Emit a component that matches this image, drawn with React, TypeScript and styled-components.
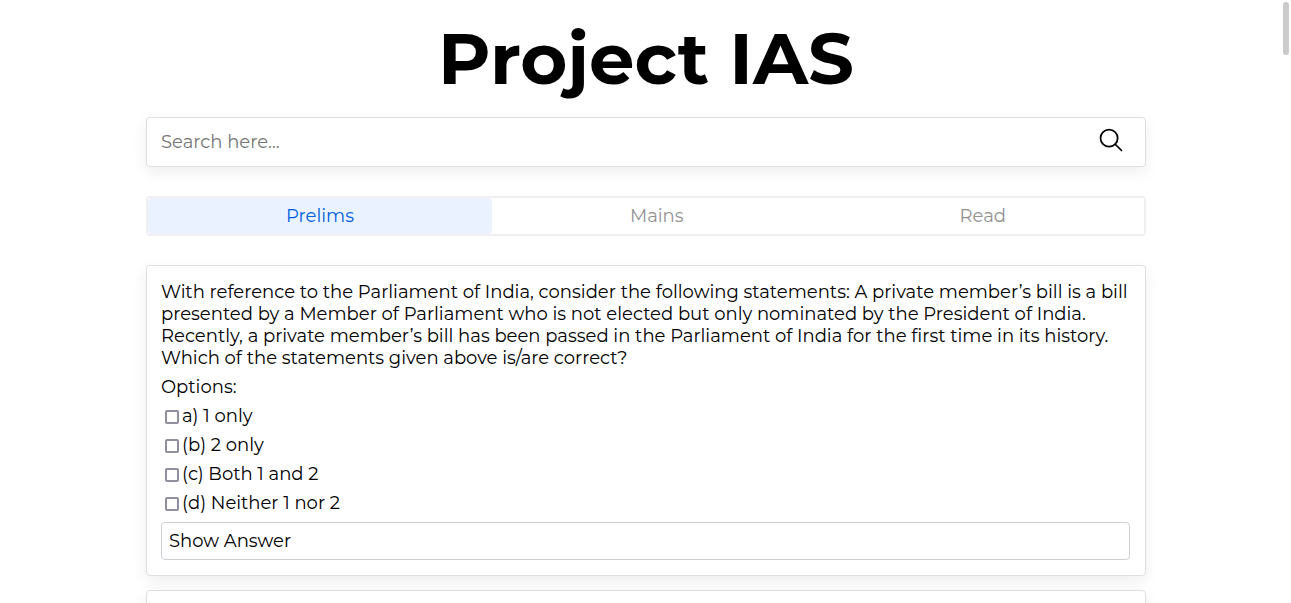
import React from "react";
import styled, { createGlobalStyle } from "styled-components";
import { IoSearchOutline } from "react-icons/io5";

const GlobalStyle = createGlobalStyle`
  *, *::before, *::after { box-sizing: border-box; }
  html { scrollbar-width: none; }
  body {
    margin: 0;
    background: #fff;
    color: #000;
    font-family: Montserrat, Inter, sans-serif;
    font-size: 18px;
    line-height: 22px;
  }
  button, input { font: inherit; color: inherit; }
`;

const Page = styled.main`
  width: 100%;
  max-width: 1001px;
  margin: 0 auto;
  padding-left: 1px;
`;

const Title = styled.h1`
  margin: 0;
  padding: 14px 0 15px;
  font-size: 72px;
  line-height: 88px;
  font-weight: 700;
  text-align: center;
`;

const SearchBar = styled.form`
  display: flex;
  align-items: center;
  height: 50px;
  border: 1px solid #dfdfdf;
  border-radius: 4px;
  background: #fff;
  box-shadow: 0 5px 15px rgba(0, 0, 0, 0.07);
`;

const SearchInput = styled.input`
  flex: 1;
  min-width: 0;
  padding: 0 14px;
  border: 0;
  outline: 0;
  background: transparent;
  &::placeholder { color: #757575; opacity: 1; }
`;

const SearchButton = styled.button`
  display: flex;
  padding: 0 20px 4px;
  border: 0;
  background: transparent;
  cursor: pointer;
`;

const Tabs = styled.nav`
  display: flex;
  height: 40px;
  margin: 29px 0;
  border: 2px solid #f0f0f0;
  border-radius: 4px;
`;

const Tab = styled.button<{ $active?: boolean }>`
  flex: 1 1 auto;
  padding: 0;
  border: 0;
  border-radius: 4px;
  background: ${({ $active }) => ($active ? "#eaf2ff" : "transparent")};
  color: ${({ $active }) => ($active ? "#0060df" : "#929292")};
  cursor: pointer;
`;

const Card = styled.article`
  min-height: 311px;
  margin-bottom: 14px;
  padding: 15px 15px 15px 14px;
  border: 1px solid #dfdfdf;
  border-radius: 4px;
  background: #fff;
  box-shadow: 0 5px 15px rgba(0, 0, 0, 0.07);
`;

const Question = styled.p`
  margin: 0 0 7px;
`;

const Options = styled.fieldset`
  display: flex;
  flex-direction: column;
  gap: 7px;
  margin: 0;
  padding: 0;
  border: 0;
`;

const Legend = styled.legend`
  margin-bottom: 7px;
  padding: 0;
`;

const Option = styled.label`
  display: flex;
  align-items: center;
  width: fit-content;
`;

const Checkbox = styled.input`
  appearance: none;
  width: 14px;
  height: 14px;
  margin: 2px 3px 0 4px;
  border: 2px solid #8f8f9d;
  border-radius: 2px;
  background: #fff;
  &:checked { background: #0060df; }
`;

const AnswerButton = styled.button`
  display: block;
  width: 100%;
  height: 38px;
  margin-top: 8px;
  padding: 0 7px;
  border: 1px solid #d0d0d7;
  border-radius: 4px;
  background: #fff;
  text-align: left;
  cursor: pointer;
`;

const ScrollThumb = styled.div`
  position: fixed;
  top: 2px;
  right: 2px;
  width: 6px;
  height: 53px;
  border-radius: 3px;
  background: #cbcbcb;
`;

const options = ["a) 1 only", "(b) 2 only", "(c) Both 1 and 2", "(d) Neither 1 nor 2"];

export default function App() {
  return (
    <>
      <GlobalStyle />
      <Page>
        <Title>Project IAS</Title>
        <SearchBar onSubmit={(e) => e.preventDefault()}>
          <SearchInput type="text" placeholder="Search here..." aria-label="Search" />
          <SearchButton type="submit" aria-label="Search">
            <IoSearchOutline size={28} />
          </SearchButton>
        </SearchBar>
        <Tabs>
          <Tab type="button" $active>Prelims</Tab>
          <Tab type="button">Mains</Tab>
          <Tab type="button">Read</Tab>
        </Tabs>
        <Card>
          <Question>
            With reference to the Parliament of India, consider the following statements: A private
            member’s bill is a bill presented by a Member of Parliament who is not elected but only
            nominated by the President of India. Recently, a private member’s bill has been passed in
            the Parliament of India for the first time in its history. Which of the statements given
            above is/are correct?
          </Question>
          <Options>
            <Legend>Options:</Legend>
            {options.map((text) => (
              <Option key={text}>
                <Checkbox type="checkbox" />
                {text}
              </Option>
            ))}
          </Options>
          <AnswerButton type="button">Show Answer</AnswerButton>
        </Card>
        <Card />
      </Page>
      <ScrollThumb />
    </>
  );
}
